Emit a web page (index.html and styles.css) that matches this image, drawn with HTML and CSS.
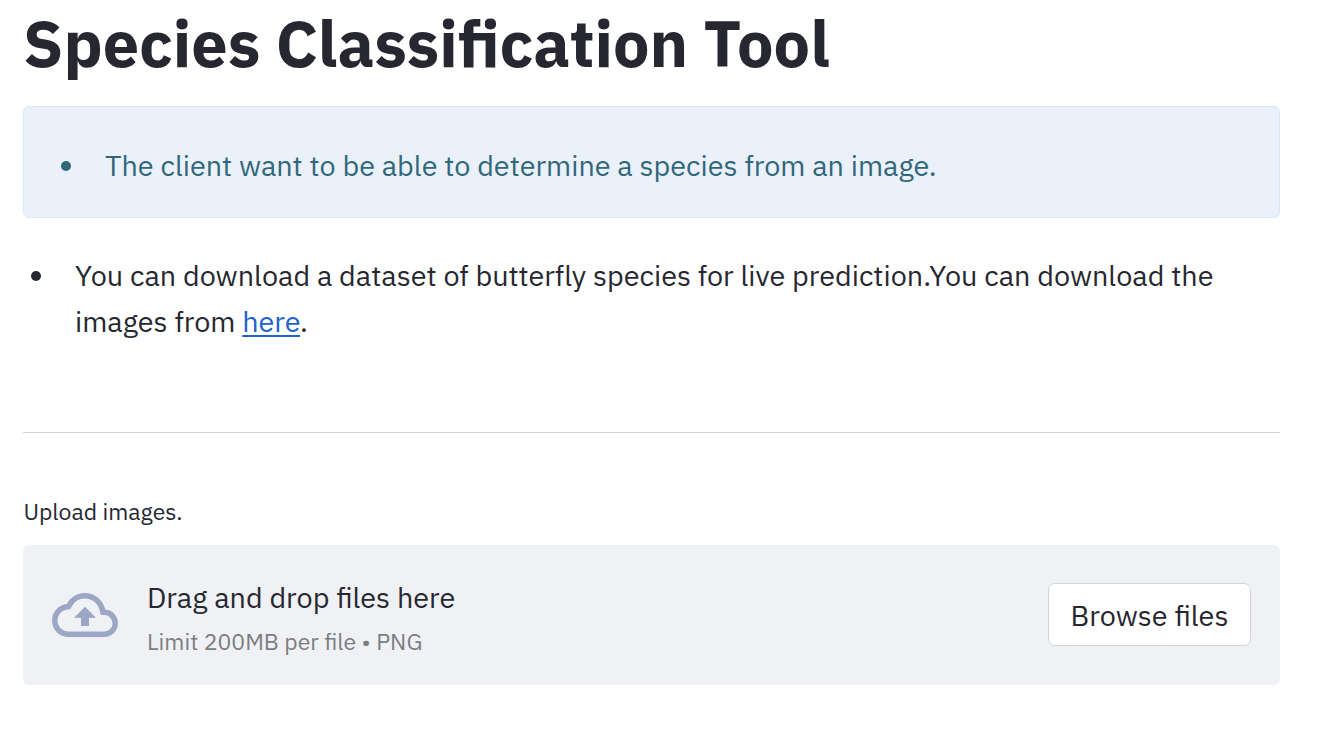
FILE: index.html
```html
<!DOCTYPE html>
<html lang="en">
<head>
<meta charset="utf-8">
<title>Species Classification Tool</title>
<link rel="stylesheet" href="styles.css">
</head>
<body>
<main class="page">
  <h1 class="title">Species Classification Tool</h1>
  <section class="info">
    <span class="dot"></span>
    <p class="text">The client want to be able to determine a species from an image.</p>
  </section>
  <section class="note">
    <span class="dot"></span>
    <p class="text">You can download a dataset of butterfly species for live prediction.You can download the<br>images from <a class="link" href="#">here</a>.</p>
  </section>
  <hr class="rule">
  <div class="label">Upload images.</div>
  <section class="upload">
    <svg class="cloud" viewBox="0 0 24 24"><path d="M19.35 10.04A7.49 7.49 0 0 0 12 4C9.11 4 6.6 5.64 5.35 8.04A5.994 5.994 0 0 0 0 14c0 3.31 2.69 6 6 6h13c2.76 0 5-2.24 5-5 0-2.64-2.05-4.78-4.65-4.96zM19 18H6c-2.21 0-4-1.79-4-4 0-2.05 1.53-3.76 3.56-3.97l1.07-.11.5-.95A5.469 5.469 0 0 1 12 6c2.62 0 4.88 1.86 5.39 4.43l.3 1.5 1.53.11A2.98 2.98 0 0 1 22 15c0 1.65-1.35 3-3 3zM8 13h2.55v3h2.9v-3H16l-4-4z"/></svg>
    <div class="copy">
      <p class="text">Drag and drop files here</p>
      <p class="small">Limit 200MB per file • PNG</p>
    </div>
    <button class="browse">Browse files</button>
  </section>
</main>
</body>
</html>
```
FILE: styles.css
```css
* { box-sizing: border-box; }
body { margin: 0; background: #fff; color: #262730; font-family: "IBM Plex Sans", "Noto Sans", sans-serif; font-size: 28.8px; }
.page { width: 1280px; padding-left: 23px; }
.title { margin: 0; height: 106px; padding-top: 4px; font-size: 64.8px; line-height: 78px; font-weight: 700; white-space: nowrap; }
.text { margin: 0; line-height: 46px; white-space: nowrap; }
.info { height: 112px; display: flex; padding: 35px 0 0 37px; border: 1px solid #d9e7f9; border-radius: 6px; background: #eaf1fb; color: #31677a; }
.dot { flex: none; width: 10px; height: 10px; margin: 19px 34px 0 0; border-radius: 50%; background: currentColor; }
.note { height: 214px; display: flex; padding: 34px 0 0 8px; }
.link { color: #2162cb; text-decoration-thickness: 2px; text-underline-offset: 3px; }
.rule { height: 1px; margin: 0; border: 0; background: #d4d4d6; }
.label { height: 112px; padding: 59px 0 0 0.4px; font-size: 23px; line-height: 38px; }
.upload { height: 140px; display: flex; align-items: flex-start; padding: 0 29px; border-radius: 6px; background: #f0f1f5; }
.cloud { width: 66px; height: 66px; margin-top: 37px; fill: #9ca7c5; }
.copy { flex: 1; padding: 29px 0 0 29px; }
.small { margin: 3px 0 0; color: #7c7d82; font-size: 23.04px; line-height: 36px; white-space: nowrap; }
.browse { width: 203px; height: 63px; margin-top: 38px; padding: 0; border: 1px solid #d3d4d6; border-radius: 7px; background: #fff; color: inherit; font: inherit; white-space: nowrap; }
```
